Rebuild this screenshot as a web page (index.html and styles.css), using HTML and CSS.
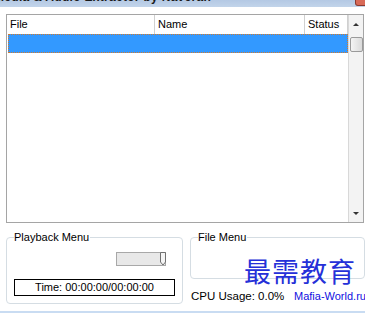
FILE: index.html
```html
<!DOCTYPE html>
<html>
<head>
<meta charset="utf-8">
<link rel="stylesheet" href="styles.css">
</head>
<body>
<div class="window">
  <div class="titlebar">
    <span class="title">Media &amp; Audio Extractor by Naveran</span>
    <span class="close"></span>
  </div>
  <div class="client">
    <div class="listbox">
      <div class="list">
        <div class="header">
          <div class="col c1">File</div>
          <div class="col c2">Name</div>
          <div class="col c3">Status</div>
        </div>
        <div class="row sel"></div>
      </div>
      <div class="scroll">
        <div class="arrow up"></div>
        <div class="thumb"></div>
        <div class="track"></div>
        <div class="arrow down"></div>
      </div>
    </div>
    <div class="bottom">
      <fieldset class="group playback">
        <legend>Playback Menu</legend>
        <div class="slider">
          <svg width="51" height="14" viewBox="0 0 51 14">
            <rect x="0.5" y="0.5" width="49" height="13" fill="#e8e8e8" stroke="#a8a8a8"/>
            <path d="M44.5 0.5 H49.5 V10 L47 13 L44.5 10 Z" fill="#f4f4f4" stroke="#707070"/>
          </svg>
        </div>
        <div class="time">Time: 00:00:00/00:00:00</div>
      </fieldset>
      <div class="rightcol">
        <fieldset class="group file">
          <legend>File Menu</legend>
        </fieldset>
        <div class="cpu">CPU Usage: 0.0%</div>
      </div>
    </div>
  </div>
  <div class="watermark">最需教育</div>
  <div class="wmsite">Mafia-World.ru</div>
  <div class="edge"></div>
</div>
</body>
</html>
```
FILE: styles.css
```css
html, body {
  margin: 0;
  padding: 0;
  background: #ffffff;
}
body {
  font-family: "Liberation Sans", Arial, sans-serif;
  font-size: 11px;
  color: #000;
}
.window {
  position: relative;
  width: 365px;
  height: 313px;
  overflow: hidden;
  display: flex;
  flex-direction: column;
}
.titlebar {
  height: 7px;
  flex: none;
  background: linear-gradient(#b4c9e4, #c2d4ea);
  overflow: hidden;
  display: flex;
  justify-content: space-between;
}
.title {
  font-size: 12px;
  font-weight: bold;
  line-height: 14px;
  margin-top: -10px;
  margin-left: -6px;
  color: #1a1a1a;
  letter-spacing: 0.3px;
  white-space: nowrap;
}
.close {
  width: 9px;
  height: 5px;
  margin-right: -1px;
  background: #d86a58;
  border: 1px solid #8a3a30;
  border-top: none;
  border-radius: 0 0 0 3px;
}
.client {
  flex: 1;
  padding: 7px 0 0 6px;
  display: flex;
  flex-direction: column;
}
.listbox {
  width: 356px;
  height: 207px;
  border: 1px solid #a5a5a5;
  display: flex;
  background: #fff;
}
.list {
  flex: 1;
  display: flex;
  flex-direction: column;
  padding-left: 1px;
}
.header {
  height: 19px;
  display: flex;
  margin-left: -1px;
}
.col {
  line-height: 19px;
  padding-left: 3px;
  box-sizing: border-box;
  border-right: 1px solid #d0d0d0;
  box-shadow: 1px 0 0 #ffffff;
}
.c1 { width: 148px; }
.c2 { width: 150px; }
.c3 { width: 43px; }
.row.sel {
  height: 19px;
  width: 340px;
  box-sizing: border-box;
  background: #3399ff;
  border: 1px dotted #d47a2a;
}
.scroll {
  width: 14px;
  background: #f3f3f3;
  border-left: 1px solid #d8d8d8;
  display: flex;
  flex-direction: column;
  align-items: center;
}
.arrow {
  width: 0;
  height: 0;
  border-left: 3px solid transparent;
  border-right: 3px solid transparent;
}
.arrow.up {
  margin-top: 8px;
  border-bottom: 3px solid #333;
}
.thumb {
  margin-top: 11px;
  width: 11px;
  height: 13px;
  border: 1px solid #9a9a9a;
  border-radius: 2px;
  background: linear-gradient(90deg, #f4f4f4, #dadada);
}
.track { flex: 1; }
.arrow.down {
  margin-bottom: 7px;
  border-top: 3px solid #333;
}
.bottom {
  display: flex;
  gap: 7px;
  margin-top: 8px;
}
.group {
  margin: 0;
  border: 1px solid #d5dde3;
  border-radius: 4px;
  padding: 0 7px;
  box-sizing: border-box;
}
.group legend {
  padding: 0 1px 0 0;
  line-height: 13px;
  margin-left: 0;
}
.playback {
  width: 177px;
  height: 73px;
  display: flex;
  flex-direction: column;
}
.slider {
  display: flex;
  justify-content: flex-end;
  margin: 8px 8px 0 0;
  height: 14px;
}
.slider svg { display: block; }
.time {
  margin-top: 13px;
  height: 15px;
  border: 1px solid #000;
  text-align: center;
  line-height: 15px;
}
.rightcol {
  flex: 1;
  display: flex;
  flex-direction: column;
}
.file {
  width: 175px;
  height: 48px;
}
.cpu {
  margin-top: 11px;
  padding-left: 1px;
  font-size: 11.5px;
}
.watermark {
  position: absolute;
  left: 244px;
  top: 254px;
  font-family: "Noto Sans CJK SC", sans-serif;
  font-size: 27px;
  line-height: 34px;
  color: #2530d8;
  letter-spacing: 1px;
  font-weight: 400;
}
.wmsite {
  position: absolute;
  left: 294px;
  top: 290px;
  font-size: 11px;
  color: #1010e0;
  white-space: nowrap;
}
.edge {
  position: absolute;
  left: 0;
  right: 0;
  bottom: 0;
  height: 2px;
  background: #c9dcf2;
}
```
